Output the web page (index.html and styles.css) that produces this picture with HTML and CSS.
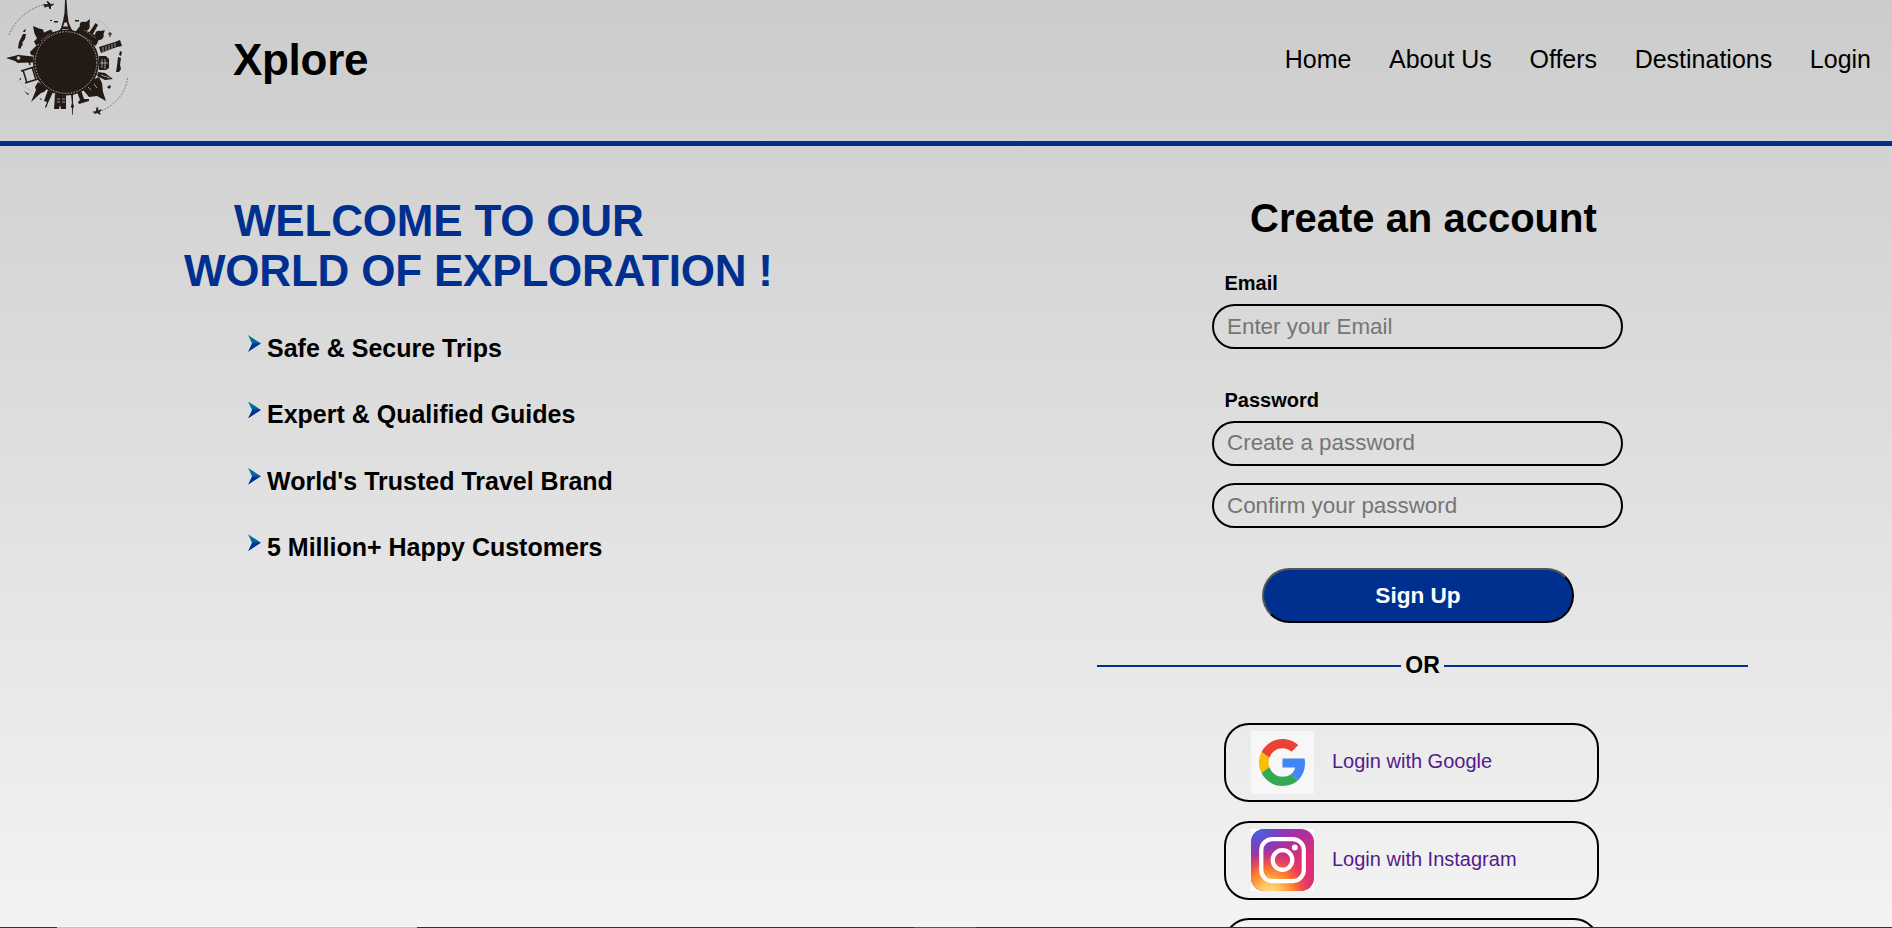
FILE: index.html
```html
<!DOCTYPE html>
<html lang="en">
<head>
<meta charset="utf-8">
<title>Xplore</title>
<link rel="stylesheet" href="styles.css">
</head>
<body>
<header class="header">
  <svg class="logo" viewBox="0 0 135 125">
    <g fill="#241a15" stroke="none">
      <circle cx="66" cy="62.500" r="33"/>
      <!-- Eiffel tower -->
      <path fill-rule="evenodd" d="M65 0h1.500l1 14 1 8 2.500 6 3 5H58l3-5 2-7 1.500-8zM64.500 22.500l-1.500 4h5l-1.200-4zM62.500 29l-1.500 3h9l-2-3z"/>
      <!-- Big Ben -->
      <path d="M6 58l10-2.500 2-.7 3 .5 12 1.200v6l-12 .2-3 .3-3-2z"/>
      <!-- mosques -->
      <path d="M33 26l6 2.500 4 1 1 3 7-3 2 3-9 6 1 2-9 5-2-4 3-3-2.500-5zM76 31l4-5c-1-4 2-5 6-4l4-3-.5 5c1 4-1 6-3 7l3 1 6-9 2.500 2-5 9 2 1c0-4 3-5 6-4l4-1-1.500 4c1 4-2 6-5 6l-1 3-2 3-20-14z"/>
      <!-- leaning tower, colosseum -->
      <path d="M99 47l16-5 5-2 2 6-5 1-16 6zM99 56l7 0 3 3v9l-3 2h-7zM98 72l7 1 8 6-8 1-8-4z"/>
      <path d="M92 80l7-3 3 6 1 9 3 9-9-5-8 1-5-6-4-1z"/>
      <!-- lower monuments -->
      <path d="M38 82l10 6-4 4-3 1-10 9 5-12-1-3zM48 90l5 2-5 11-2 5-1-1 2-5-3-1zM55 94h11v15h-5l-1-4-1 4h-5zM71 94h2v9l1 4-1 1-.3 7h-.6l-.2-7-1-1 1-4zM77 92l4-2 3 9 5 0 0 2-10 3-1-2 2-2z"/>
      <path d="M30 52l7-7 4 2-5 9-5-1z"/>
      <!-- trees and clouds -->
      <path d="M23 34l3 0-1 5-3 4 1 1-3 5-2-1 1-6zM24 30l2-1-1 3-2 0zM118 57l3 1-1 7 1 4-2 3h-3l1-6zM120 51l2 1-1 4-2-1zM50 20l2 0 0 1-2 0zM54 21l4 0 0 1.500-4 0zM75 20l4 0 0 1.500-4 0zM107 87l3-2 1 2-2 2zM24 91l5 3-1 1zM39 98l3 1-1 1zM19 79l2-1 0 2z"/>
      <!-- planes -->
      <path d="M43 4l5 .3-1.500-3 1.500 0 3 3 3-.8-.5 1.500-2.500 1 0 3-1.500 0-1-2.500-3 .5-.5 1.500-1-3zM92 112l4-1 .5-3.500 1.500-.3.500 3.300 3-1.500-.5 2-1.500 1 1.500 2.500-1.500 0-2.500-1.500-1.500.5-1 .5-.5-1.500z"/>
    </g>
    <g fill="none" stroke="#4a423d">
      <path d="M9 35C15 20 28 9 43 5" stroke-width=".6" stroke-dasharray="2 1.200"/>
      <path d="M127.500 78C126 93 114 106 101 111" stroke-width=".6" stroke-dasharray="2 1.200"/>
      <path d="M97 20q10 3 13 14" stroke-width=".3" stroke-dasharray="1 1"/>
      <path d="M18 80q5 7 14 11" stroke-width=".3" stroke-dasharray="1 1"/>
    </g>
    <g fill="none" stroke="#241a15">
      <path d="M21 71l13-4M25 83l13-4M23 70l4 13M32 67l4 13M30 65l-1-4" stroke-width="1.500"/>
      <path d="M108 34l4 0M110 32v5" stroke-width="1"/>
    </g>
    <g fill="none" stroke="#cfcfcf" stroke-width=".7">
      <circle cx="66" cy="62.500" r="30.800" stroke-dasharray="1.800 1.200"/>
      <path d="M41 41l9-7M79 34l13 8M84 30l12 8" stroke-dasharray="1 1"/>
      <path d="M103 47v5M106 46v5M109 45v5M112 44v5M115 43v4M102 59v9M105 59v10M100 63h8M101 75l9 3M57 99h3M62 99h3M57 102h3M62 102h3M88 87l3 3M94 84l3 4"/>
      <circle cx="18.500" cy="58" r="1.500" fill="#cfcfcf"/>
    </g>
  </svg>
  <h1 class="brand">Xplore</h1>
  <nav class="nav">
    <a>Home</a><a>About Us</a><a>Offers</a><a>Destinations</a><a>Login</a>
  </nav>
</header>
<main class="main">
  <section class="intro">
    <h2 class="welcome"><span class="welcome-first">WELCOME TO OUR</span><br>WORLD OF EXPLORATION !</h2>
    <ul class="features">
      <li><i class="arrow"></i>Safe &amp; Secure Trips</li>
      <li><i class="arrow"></i>Expert &amp; Qualified Guides</li>
      <li><i class="arrow"></i>World's Trusted Travel Brand</li>
      <li><i class="arrow"></i>5 Million+ Happy Customers</li>
    </ul>
  </section>
  <section class="signup">
    <h2 class="title">Create an account</h2>
    <form class="form">
      <label class="label">Email</label>
      <input class="field" type="email" placeholder="Enter your Email">
      <label class="label label-password">Password</label>
      <input class="field field-password" type="password" placeholder="Create a password">
      <input class="field field-confirm" type="password" placeholder="Confirm your password">
      <button class="submit" type="button">Sign Up</button>
    </form>
    <div class="divider">OR</div>
    <div class="socials">
      <a class="social">
        <svg class="social-icon" viewBox="0 0 63 63">
          <rect width="63" height="63" fill="#f7f7f7"/>
          <g transform="translate(8 8) scale(.979)">
            <path fill="#ea4335" d="M24 9.500c3.540 0 6.710 1.220 9.210 3.600l6.850-6.850C35.900 2.380 30.470 0 24 0 14.620 0 6.510 5.380 2.560 13.220l7.980 6.190C12.430 13.720 17.740 9.500 24 9.500z"/>
            <path fill="#4285f4" d="M46.980 24.550c0-1.570-.15-3.090-.38-4.550H24v9.020h12.940c-.58 2.960-2.260 5.480-4.780 7.180l7.730 6c4.510-4.180 7.090-10.360 7.090-17.650z"/>
            <path fill="#fbbc05" d="M10.530 28.590c-.48-1.450-.76-2.990-.76-4.590s.27-3.140.76-4.590l-7.980-6.190C.92 16.460 0 20.120 0 24c0 3.880.92 7.540 2.560 10.780l7.970-6.190z"/>
            <path fill="#34a853" d="M24 48c6.480 0 11.930-2.130 15.890-5.810l-7.730-6c-2.150 1.450-4.920 2.300-8.160 2.300-6.260 0-11.570-4.220-13.470-9.910l-7.980 6.190C6.510 42.620 14.620 48 24 48z"/>
          </g>
        </svg>
        <span class="social-text">Login with Google</span>
      </a>
      <a class="social">
        <svg class="social-icon" viewBox="0 0 63 63">
          <defs>
            <linearGradient id="ig-base" x1=".2" y1="0" x2=".75" y2="1">
              <stop offset="0" stop-color="#7a3bc4"/><stop offset=".3" stop-color="#a8309f"/><stop offset=".65" stop-color="#e02e72"/><stop offset="1" stop-color="#d92c7c"/>
            </linearGradient>
            <radialGradient id="ig-warm" cx=".3" cy="1.050" r=".72">
              <stop offset="0" stop-color="#ffe185"/><stop offset=".25" stop-color="#ffc45c"/><stop offset=".55" stop-color="#ff7a2b"/><stop offset="1" stop-color="#f03a4f" stop-opacity="0"/>
            </radialGradient>
            <radialGradient id="ig-cool" cx=".12" cy="0" r=".5">
              <stop offset="0" stop-color="#3f6be0"/><stop offset="1" stop-color="#6a3fc8" stop-opacity="0"/>
            </radialGradient>
          </defs>
          <rect width="63" height="62" fill="#fff"/>
          <rect width="63" height="62" rx="13" fill="url(#ig-base)"/>
          <rect width="63" height="62" rx="13" fill="url(#ig-warm)"/>
          <rect width="63" height="62" rx="13" fill="url(#ig-cool)"/>
          <g fill="none" stroke="#fff" stroke-width="4.200">
            <rect x="10.300" y="10.100" width="42.500" height="42" rx="11"/>
            <circle cx="31.500" cy="31" r="9.800"/>
          </g>
          <circle cx="43.800" cy="18.500" r="2.900" fill="#fff"/>
        </svg>
        <span class="social-text">Login with Instagram</span>
      </a>
      <a class="social"></a>
    </div>
  </section>
</main>
<div class="bottom-edge"></div>
</body>
</html>
```

FILE: styles.css
```css
* { box-sizing: border-box; }
body {
  margin: 0;
  height: 928px;
  overflow: hidden;
  position: relative;
  font-family: "Liberation Sans", Arial, sans-serif;
  color: #000;
  background: linear-gradient(#ccc, #f3f3f3);
}
.header {
  display: flex;
  align-items: flex-start;
  height: 146px;
  border-bottom: 5px solid #00308f;
}
.logo { width: 135px; height: 125px; }
.brand {
  margin: 35px 0 0 98px;
  font-size: 44px;
  line-height: 50px;
  letter-spacing: -.3px;
}
.nav {
  display: flex;
  gap: 37.600px;
  margin: 45px 21px 0 auto;
  font-size: 25px;
  line-height: 29px;
}
.main { display: flex; height: 782px; overflow: hidden; }
.intro { width: 1097px; padding: 50px 0 0 184px; }
.welcome {
  margin: 0;
  font-size: 44px;
  line-height: 50px;
  letter-spacing: -.2px;
  color: #00308f;
}
.welcome-first { margin-left: 50px; }
.features {
  list-style: none;
  margin: 38px 0 0;
  padding: 0 0 0 64px;
  font-size: 25px;
  font-weight: bold;
}
.features li {
  display: flex;
  align-items: flex-start;
  height: 66.400px;
  line-height: 29px;
}
.arrow {
  width: 13px;
  height: 17px;
  margin: 1px 6px 0 0;
  background: linear-gradient(#0081a0, #00659c 48%, #00309a 52%, #00308f);
  clip-path: polygon(0 0, 100% 50%, 0 100%, 31% 50%);
}
.signup { width: 652px; padding-top: 49px; }
.title {
  margin: 0 0 0 153px;
  font-size: 40px;
  line-height: 46px;
}
.form { display: flex; flex-direction: column; padding-left: 115px; }
.label {
  margin: 31px 0 9px 12.500px;
  font-size: 20px;
  font-weight: bold;
  line-height: 23px;
}
.label-password { margin-top: 40px; }
.field {
  width: 411px;
  height: 45px;
  padding: 0 13px;
  border: 2px solid #000;
  border-radius: 23px;
  background: transparent;
  font: 22.400px "Liberation Sans", Arial, sans-serif;
}
.field::placeholder { color: #757575; }
.field-password { padding-bottom: 2px; }
.field-confirm { margin-top: 17px; }
.submit {
  width: 312px;
  height: 55px;
  margin: 40px 0 0 50px;
  padding: 0;
  border: 2px solid;
  border-color: #555 #000 #000 #555;
  border-radius: 28px;
  background: #00308f;
  color: #fff;
  font: bold 22.600px "Liberation Sans", Arial, sans-serif;
}
.divider {
  display: flex;
  align-items: center;
  gap: 4px;
  margin-top: 29px;
  padding-right: 1px;
  font-size: 23px;
  font-weight: bold;
  line-height: 26px;
}
.divider::before, .divider::after {
  content: "";
  flex: 1;
  height: 2px;
  margin-top: 2px;
  background: #00308f;
}
.socials {
  display: flex;
  flex-direction: column;
  gap: 18.600px;
  padding: 45px 0 0 127px;
}
.social {
  display: flex;
  align-items: center;
  flex: none;
  width: 375px;
  height: 79px;
  padding-left: 25px;
  border: 2px solid #000;
  border-radius: 25px;
  font-size: 20px;
  color: #551a8b;
}
.social-icon { width: 63px; height: 63px; margin-right: 18px; }
.social-text { padding-bottom: 2px; }
.bottom-edge {
  position: absolute;
  left: 0;
  right: 0;
  bottom: 0;
  height: 1px;
  background: linear-gradient(90deg, #333 57px, #c4c4c4 57px 417px, #333 417px 914px, #555 914px 976px, #333 976px);
}
```
